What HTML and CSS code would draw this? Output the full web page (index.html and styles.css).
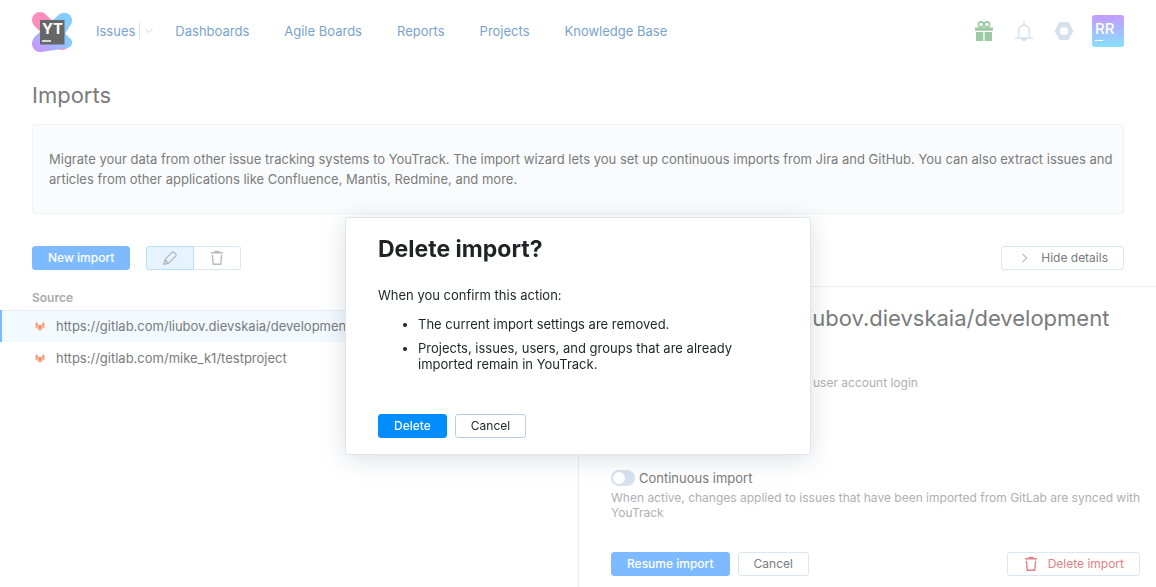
FILE: index.html
```html
<!DOCTYPE html>
<html lang="en">
<head>
<meta charset="utf-8">
<meta name="viewport" content="width=device-width, initial-scale=1">
<title>Imports</title>
<link rel="stylesheet" href="styles.css">
</head>
<body>
<div class="page">
  <header class="header">
    <a class="logo" href="#" aria-label="YouTrack">
      <svg width="40" height="40" viewBox="0 0 40 40">
        <defs>
          <linearGradient id="lg-body" x1="0" y1="1" x2="1" y2="0">
            <stop offset="0.1" stop-color="#c59aff"/>
            <stop offset="0.6" stop-color="#84ccfb"/>
          </linearGradient>
        </defs>
        <path d="M8 8 30 30" stroke="#ff8dbd" stroke-width="16" stroke-linecap="round"/>
        <path d="M26 3.500C31-2 40 1 40 8.500c0 2.500-1 4.500-3 6.500l-4 7 5 4c4 4 2 9-3 10L10 40C3 40.500 0 36 0 31.500c0-3 1.500-6 4-8z" fill="url(#lg-body)"/>
        <rect x="8" y="8" width="24.500" height="24.500" fill="#666"/>
        <text class="logo-text" x="10" y="22">YT</text>
        <path d="M10 29h9" stroke="#fff" stroke-width="1.500"/>
      </svg>
    </a>
    <nav class="nav">
      <div class="nav-group">
        <a href="#">Issues</a>
        <button class="nav-more" aria-label="More issue views">
          <svg width="8" height="6" viewBox="0 0 8 6" fill="none"><path d="M.5 1 4 4.500 7.500 1" stroke="#bfd7e8"/></svg>
        </button>
      </div>
      <a href="#">Dashboards</a>
      <a href="#">Agile Boards</a>
      <a href="#">Reports</a>
      <a href="#">Projects</a>
      <a href="#">Knowledge Base</a>
    </nav>
    <div class="tools">
      <button class="tool" aria-label="What's new">
        <svg width="18" height="20" viewBox="0 0 18 20">
          <g fill="none" stroke="#9ccba3" stroke-width="1.600"><circle cx="6" cy="3.500" r="2.600"/><circle cx="12" cy="3.500" r="2.600"/></g>
          <path d="M0 6.500h18v3.300H0zM1 11h7.300v9H1zM9.700 11H17v9H9.700z" fill="#9ccba3"/>
        </svg>
      </button>
      <button class="tool" aria-label="Notifications">
        <svg width="18" height="20" viewBox="0 0 18 20" fill="none">
          <path d="M3.700 16.500V9.500a5.300 5.300 0 0 1 10.600 0v7M0 16.900h18M9 0v4" stroke="#d5e2ee" stroke-width="1.500"/>
          <path d="M6 17h6a3 3 0 0 1-6 0z" fill="#d5e2ee"/>
        </svg>
      </button>
      <button class="tool" aria-label="Administration">
        <svg width="20" height="20" viewBox="0 0 20 20"><path fill-rule="evenodd" d="M5.500 1h9L19.500 10l-5 9h-9L.5 10zM10 6a4 4 0 1 0 0 8 4 4 0 0 0 0-8z" fill="#d5e2ee"/></svg>
      </button>
      <button class="avatar" aria-label="Profile"><span class="avatar-name">RR</span></button>
    </div>
  </header>

  <main class="main">
    <div class="intro">
      <h1 class="title">Imports</h1>
      <p class="banner">Migrate your data from other issue tracking systems to YouTrack. The import wizard lets you set up continuous imports from Jira and GitHub. You can also extract issues and articles from other applications like Confluence, Mantis, Redmine, and more.</p>
      <div class="toolbar">
        <button class="btn btn-primary">New import</button>
        <div class="btn-group">
          <button class="icon-btn icon-btn-active" aria-label="Edit">
            <svg width="16" height="16" viewBox="0 0 16 16" fill="none"><path d="M2 14.200 3 9.500 10 2.200a1.300 1.300 0 0 1 1.900 0l1.900 1.900a1.300 1.300 0 0 1 0 1.900L6.700 13.200zM3 9.700l3.600 3.500" stroke="#b5b9bc" stroke-width="1.300"/><path d="m1.500 14.700.8-3 2.200 2.200z" fill="#b5b9bc"/></svg>
          </button>
          <button class="icon-btn" aria-label="Delete">
            <svg width="14" height="16" viewBox="0 0 14 16" fill="none"><path d="M1 2.700h12M4.500 1.600h5" stroke="#b9b9b9" stroke-width="1.500"/><path d="M2.300 4.800 3.300 14.300h7.400l1-9.500" stroke="#b9b9b9" stroke-width="1.400"/></svg>
          </button>
        </div>
        <button class="btn btn-details">
          <svg width="8" height="10" viewBox="0 0 8 10" fill="none"><path d="M1.500.8 5.700 5 1.500 9.200" stroke="#b9b9b9" stroke-width="1.200"/></svg>
          Hide details
        </button>
      </div>
    </div>

    <div class="columns">
      <section class="sources">
        <table class="source-table">
          <thead><tr><th scope="col">Source</th></tr></thead>
          <tbody>
            <tr class="selected"><td><div class="source">
              <svg width="10" height="10" viewBox="0 0 10 10"><path d="M5 9.700 0 6 1.300.7 3.200 4h3.600L8.700.7 10 6z" fill="#ffb58a"/><path d="M5 9.700 3.200 4h3.600zM1.300.7 3.200 4H.5zM8.700.7 6.800 4h2.700z" fill="#f28f80"/></svg>
              https://gitlab.com/liubov.dievskaia/development</div></td></tr>
            <tr><td><div class="source">
              <svg width="10" height="10" viewBox="0 0 10 10"><path d="M5 9.700 0 6 1.300.7 3.200 4h3.600L8.700.7 10 6z" fill="#ffb58a"/><path d="M5 9.700 3.200 4h3.600zM1.300.7 3.200 4H.5zM8.700.7 6.800 4h2.700z" fill="#f28f80"/></svg>
              https://gitlab.com/mike_k1/testproject</div></td></tr>
          </tbody>
        </table>
      </section>
      <section class="details">
        <h2 class="title details-title">https://gitlab.com/liubov.dievskaia/development</h2>
        <p class="hint account">user account login</p>
        <label class="toggle-row"><input class="toggle" type="checkbox">Continuous import</label>
        <p class="hint sync-hint">When active, changes applied to issues that have been imported from GitLab are synced with YouTrack</p>
        <div class="actions">
          <button class="btn btn-primary">Resume import</button>
          <button class="btn">Cancel</button>
          <button class="btn btn-danger">
            <svg width="14" height="16" viewBox="0 0 14 16" fill="none"><path d="M1 2.700h12M4.500 1.600h5" stroke="#e28085" stroke-width="1.500"/><path d="M2.300 4.800 3.300 14.300h7.400l1-9.500" stroke="#e28085" stroke-width="1.400"/></svg>
            Delete import
          </button>
        </div>
      </section>
    </div>
  </main>
</div>

<div class="overlay">
  <div class="dialog" role="dialog" aria-modal="true" aria-labelledby="dialog-title">
    <h2 class="dialog-title" id="dialog-title">Delete import?</h2>
    <p class="dialog-text">When you confirm this action:</p>
    <ul class="dialog-list">
      <li>The current import settings are removed.</li>
      <li>Projects, issues, users, and groups that are already imported remain in YouTrack.</li>
    </ul>
    <div class="dialog-actions">
      <button class="btn btn-confirm">Delete</button>
      <button class="btn btn-dismiss">Cancel</button>
    </div>
  </div>
</div>
</body>
</html>
```
FILE: styles.css
```css
* { box-sizing: border-box; }

body {
  margin: 0;
  background: #fff;
  color: #797b7c;
  font: 13px/20px Inter, "Liberation Sans", sans-serif;
}

h1, h2, p, ul { margin: 0; }
a { color: #79a3cd; text-decoration: none; }
button { font: inherit; color: inherit; margin: 0; padding: 0; border: 0; background: none; }
svg { display: block; flex: none; }

.page { display: flex; flex-direction: column; min-height: 100vh; }

.header { display: flex; align-items: center; height: 62px; padding: 0 32px; }
.logo { margin-right: 24px; padding-top: 2px; }
.logo-text { font: 700 15px Inter, sans-serif; fill: #fff; }
.nav { display: flex; align-items: center; gap: 35px; white-space: nowrap; }
.nav-group { display: flex; align-items: center; gap: 4px; margin-right: -13px; }
.nav-more { display: flex; align-items: center; height: 16px; padding-left: 5px; border-left: 1px solid #d5e2ee; }
.tools { display: flex; align-items: center; gap: 20px; margin-left: auto; }
.tool { display: flex; justify-content: center; width: 20px; }
.avatar {
  width: 32px;
  height: 32px;
  margin-left: -2px;
  padding: 4px 3px;
  border-radius: 3px;
  background: linear-gradient(#c59aff, #86e0fb);
  color: #fff;
  font-size: 15px;
  font-weight: 500;
  line-height: 16px;
  text-align: left;
}
.avatar-name { display: block; }
.avatar::after { content: ""; display: block; width: 8px; height: 1px; margin-top: 3px; background: #fff; }

.main { display: flex; flex: 1; flex-direction: column; }
.intro { padding: 17px 32px 16px; }
.title { font-size: 22px; font-weight: 400; line-height: 32px; }
.banner { margin-top: 13px; padding: 24px 8px 24px 16px; border: 1px solid #edf2f6; border-radius: 3px; background: #fafbfc; }
.toolbar { display: flex; gap: 16px; margin-top: 32px; }

.btn {
  display: flex;
  align-items: center;
  justify-content: center;
  height: 24px;
  padding: 0 15px;
  border: 1px solid #d9e7f5;
  border-radius: 3px;
  background: #fff;
  font-size: 12px;
  white-space: nowrap;
}
.btn-primary { border-color: #7dbaff; background: #7dbaff; color: #fff; font-weight: 500; }
.btn-details { gap: 12px; margin-left: auto; padding-left: 19px; }
.btn-danger { gap: 10px; margin-left: auto; padding-left: 16px; color: #e28085; }
.btn-group { display: flex; }
.icon-btn {
  display: flex;
  align-items: center;
  justify-content: center;
  width: 47px;
  height: 24px;
  border: 1px solid #d9e7f5;
  border-left: 0;
  border-radius: 0 3px 3px 0;
}
.icon-btn-active { width: 48px; border: 1px solid #b9dffa; border-radius: 3px 0 0 3px; background: #e5f4ff; }

.columns { display: grid; flex: 1; grid-template-columns: 1fr 1fr; }
.source-table { width: 100%; border-collapse: collapse; }
.source-table th { height: 24px; padding: 0 31px; color: #a9abac; font-size: 12px; font-weight: 600; text-align: left; border-bottom: 1px solid #e7edf2; }
.source-table td { height: 32px; padding: 0; border-left: 2px solid transparent; }
.source-table .selected td { border-left-color: #7dbaff; background: #f2f9ff; }
.source { display: flex; align-items: center; gap: 11px; padding-left: 33px; white-space: nowrap; }

.details { display: flex; flex-direction: column; min-width: 0; padding: 15px 16px 0 32px; border-top: 1px solid #e9eef2; border-left: 1px solid #e9eef2; }
.details-title { white-space: nowrap; }
.hint { color: #aeb0b1; font-size: 12px; line-height: 15px; }
.sync-hint { margin-right: -8px; }
.account { margin-top: 41px; margin-left: 202px; }
.toggle-row { display: flex; align-items: center; gap: 4px; margin-top: 78px; margin-bottom: 2px; }
.toggle { display: flex; align-items: center; appearance: none; width: 24px; height: 16px; margin: 0; padding: 2px; border-radius: 8px; background: #d5e2ee; }
.toggle::before { content: ""; width: 12px; height: 12px; border-radius: 50%; background: #fff; }
.toggle:checked { justify-content: flex-end; background: #7dbaff; }
.actions { display: flex; gap: 8px; margin-top: 32px; padding-bottom: 8px; }

.overlay { position: fixed; inset: 0; display: flex; align-items: flex-start; justify-content: center; padding-top: 217px; }
.dialog {
  width: 466px;
  padding: 15px 32px 16px;
  border: 1px solid #dfe5eb;
  border-radius: 3px;
  background: #fff;
  box-shadow: 0 4px 24px rgba(0, 42, 76, 0.15);
  color: #1f2326;
}
.dialog-title { font-size: 23px; font-weight: 700; line-height: 32px; }
.dialog-text { margin-top: 20px; }
.dialog-list { display: grid; gap: 8px; margin-top: 11px; padding: 0 40px; line-height: 16px; }
.dialog-actions { display: flex; gap: 8px; margin-top: 42px; }
.btn-confirm { border-color: #008eff; background: #008eff; color: #fff; font-weight: 500; }
.btn-dismiss { border-color: #b8d1e5; }
```
